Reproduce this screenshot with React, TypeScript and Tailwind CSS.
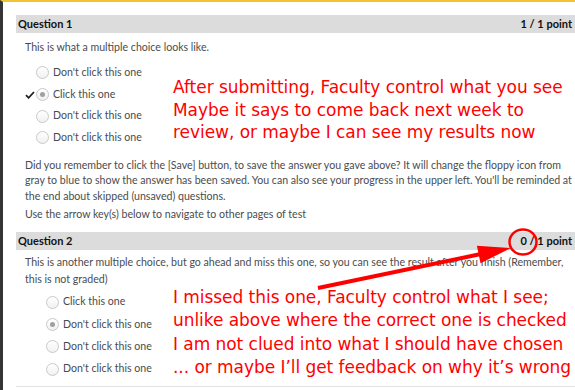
import clsx from 'clsx'

interface Choice {
  label: string
  selected?: boolean
  correct?: boolean
}

const Q1_CHOICES: Choice[] = [
  { label: "Don't click this one" },
  { label: 'Click this one', selected: true, correct: true },
  { label: "Don't click this one" },
  { label: "Don't click this one" },
]

const Q2_CHOICES: Choice[] = [
  { label: 'Click this one' },
  { label: "Don't click this one", selected: true },
  { label: "Don't click this one" },
  { label: "Don't click this one" },
]

function Radio({ selected }: { selected?: boolean }) {
  return (
    <span className="w-[13px] h-[13px] rounded-full border border-[#c9c9c9] bg-gradient-to-b from-white to-[#f1f1f1] flex items-center justify-center flex-shrink-0">
      {selected && <span className="w-[5px] h-[5px] rounded-full bg-[#a0a0a0]" />}
    </span>
  )
}

function QuestionHeader({ title, score }: { title: string; score: string }) {
  return (
    <div className="h-[18px] bg-[#dcdcdc] flex items-center justify-between pl-[2px] pr-[3px] text-[11px] font-bold text-[#111]">
      <span>{title}</span>
      <span>{score}</span>
    </div>
  )
}

function ChoiceList({ choices, indent, rowH }: { choices: Choice[]; indent: string; rowH: string }) {
  return (
    <div className={indent}>
      {choices.map((c, i) => (
        <div key={i} className={clsx('flex items-center', rowH)}>
          <span className="w-[20px] flex justify-end pr-[1px]">
            {c.correct && (
              <svg width="10" height="8" viewBox="0 0 10 8">
                <path d="M1 4.2 L3.6 6.8 L9 1" fill="none" stroke="#222" strokeWidth="1.8" />
              </svg>
            )}
          </span>
          <Radio selected={c.selected} />
          <span className="ml-[4px]">{c.label}</span>
        </div>
      ))}
    </div>
  )
}

function Note({ lines, className }: { lines: string[]; className: string }) {
  return (
    <div
      className={clsx('absolute left-[170px] text-[#ff0000] text-[17px] tracking-[-0.05px] whitespace-nowrap', className)}
      style={{ fontFamily: '"DejaVu Sans", Verdana, sans-serif' }}
    >
      {lines.map((l) => (
        <div key={l}>{l}</div>
      ))}
    </div>
  )
}

export default function App() {
  return (
    <div
      className="relative w-[575px] h-[390px] overflow-hidden bg-white border-l-[3px] border-l-[#353535] border-t-2 border-t-[#f0c330] text-[#494c4e] text-[10.6px]"
      style={{ fontFamily: 'Lato, "Open Sans", sans-serif' }}
    >
      <div className="pl-[13px] pt-[13px]">
        <QuestionHeader title="Question 1" score="1 / 1 point" />
        <p className="mt-[7px] pl-[9px] leading-[15px]">This is what a multiple choice looks like.</p>
        <div className="mt-[7px]">
          <ChoiceList choices={Q1_CHOICES} indent="pl-[0px]" rowH="h-[21.7px]" />
        </div>
        <p className="mt-[9px] pl-[9px] pr-[3px] leading-[15.5px]">
          Did you remember to click the [Save] button, to save the answer you gave above? It will change the floppy icon from
          gray to blue to show the answer has been saved. You can also see your progress in the upper left. You'll be reminded at
          the end about skipped (unsaved) questions.
        </p>
        <p className="mt-[3px] pl-[9px] leading-[15px]">Use the arrow key(s) below to navigate to other pages of test</p>

        <div className="mt-[10px]">
          <QuestionHeader title="Question 2" score="0 / 1 point" />
        </div>
        <p className="mt-[4px] pl-[9px] pr-[3px] leading-[16.5px]">
          This is another multiple choice, but go ahead and miss this one, so you can see the result after you finish (Remember,
          this is not graded)
        </p>
        <div className="mt-[4px]">
          <ChoiceList choices={Q2_CHOICES} indent="pl-[10px]" rowH="h-[22.3px]" />
        </div>
        <div className="mt-[6px] border-t border-[#e3e3e3]" />
      </div>

      {/* annotations */}
      <Note
        className="top-[74px] leading-[22.5px]"
        lines={[
          'After submitting, Faculty control what you see',
          'Maybe it says to come back next week to',
          'review, or maybe I can see my results now',
        ]}
      />
      <Note
        className="top-[284px] leading-[23.3px]"
        lines={[
          'I missed this one, Faculty control what I see;',
          'unlike above where the correct one is checked',
          'I am not clued into what I should have chosen',
          '... or maybe I\u2019ll get feedback on why it\u2019s wrong',
        ]}
      />
      <svg className="absolute left-[-3px] top-[-2px]" width="575" height="390" viewBox="0 0 575 390">
        <line x1="318" y1="288" x2="482" y2="253.8" stroke="#ff0000" strokeWidth="4" />
        <polygon points="511,248 480.5,263.3 476.9,245.7" fill="#ff0000" />
        <ellipse cx="523" cy="242" rx="13.5" ry="12.5" fill="none" stroke="#ff0000" strokeWidth="2.5" />
      </svg>
    </div>
  )
}
